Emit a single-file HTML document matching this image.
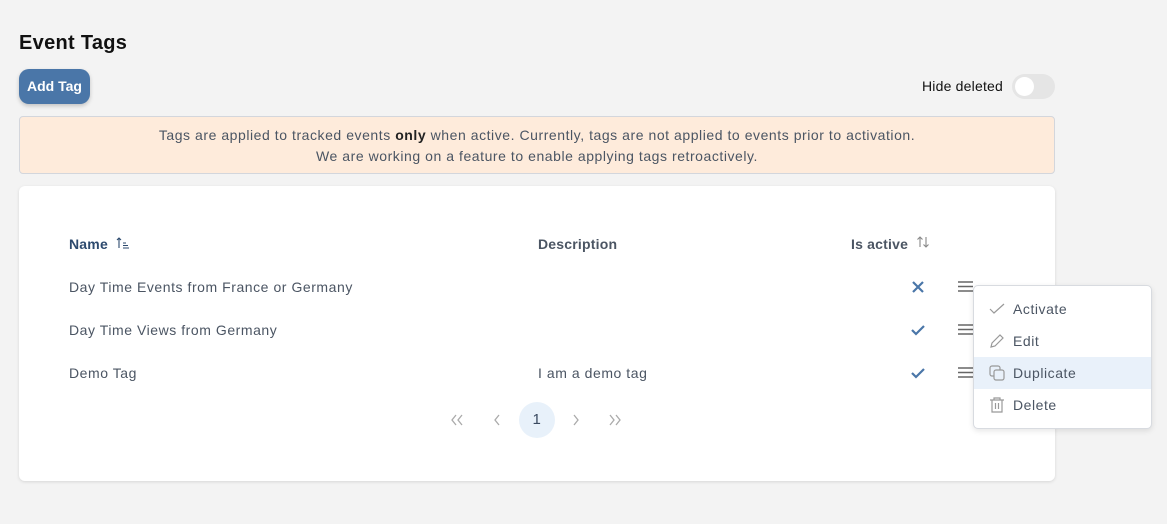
<!DOCTYPE html><html><head><style>
*{box-sizing:border-box;margin:0;padding:0}
body{width:1167px;height:524px;background:#f3f3f3;font-family:"Liberation Sans",sans-serif;position:relative;overflow:hidden;color:#4b5563;letter-spacing:0.55px}
.a{position:absolute}
h1{position:absolute;left:19px;top:32px;font-size:20px;font-weight:bold;color:#111;letter-spacing:0.3px}
.btn{left:19px;top:69px;width:71px;height:35px;background:#4a76a8;border-radius:10px;color:#fff;font-weight:bold;font-size:14px;line-height:35px;text-align:center;box-shadow:0 2px 4px rgba(0,0,0,.2);letter-spacing:0}
.alert{left:19px;top:116px;width:1036px;height:58px;background:#feebdb;border:1px solid #d3d6dc;border-radius:4px;text-align:center;font-size:14px;line-height:21px;padding-top:8px;color:#4b5563}
.card{left:19px;top:186px;width:1036px;height:295px;background:#fff;border-radius:6px;box-shadow:0 1px 3px rgba(0,0,0,.12)}
.th{font-size:14px;font-weight:bold;color:#4b5563;letter-spacing:0.2px}
.td{font-size:14px;color:#4b5563}
.menu{left:973px;top:285px;width:179px;height:144px;background:#fff;border:1px solid #d8dbe0;border-radius:5px;box-shadow:0 2px 6px rgba(0,0,0,.1)}
.mi{position:absolute;left:0;width:177px;height:32px;font-size:14px;line-height:32px;padding-left:39px;color:#4b5563}
.mi svg{position:absolute;left:15px;top:8px}
</style></head><body>
<h1>Event Tags</h1>
<div class="a btn">Add Tag</div>
<div class="a" style="left:922px;top:78px;font-size:14px;color:#111;letter-spacing:0.2px">Hide deleted</div>
<div class="a" style="left:1012px;top:74px;width:43px;height:25px;border-radius:13px;background:#e5e5e5"><div style="position:absolute;left:3px;top:3px;width:19px;height:19px;border-radius:50%;background:#fff"></div></div>
<div class="a alert">Tags are applied to tracked events <b style="color:#222">only</b> when active. Currently, tags are not applied to events prior to activation.<br>We are working on a feature to enable applying tags retroactively.</div>
<div class="a card"></div>
<div class="a th" style="left:69px;top:236px;color:#2d4a6e">Name</div>
<svg class="a" style="left:116px;top:236px" width="14" height="14"><path d="M3 12V2M1 4L3 2L5 4M7 7H10M7 9.5H12M7 12H13" stroke="#2d4a6e" stroke-width="1.1" fill="none"/></svg>
<div class="a th" style="left:538px;top:236px">Description</div>
<div class="a th" style="left:851px;top:236px">Is active</div>
<svg class="a" style="left:916px;top:235px" width="14" height="14"><path d="M4 12V2M1.5 4.5L4 2L6.5 4.5M10 2V12M7.5 9.5L10 12L12.5 9.5" stroke="#888" stroke-width="1.1" fill="none"/></svg>
<div class="a td" style="left:69px;top:279px">Day Time Events from France or Germany</div>
<div class="a td" style="left:69px;top:322px">Day Time Views from Germany</div>
<div class="a td" style="left:69px;top:365px">Demo Tag</div>
<div class="a td" style="left:538px;top:365px">I am a demo tag</div>
<svg class="a" style="left:911px;top:280px" width="14" height="14"><path d="M2 2L12 12M12 2L2 12" stroke="#4a76a8" stroke-width="2.2"/></svg>
<svg class="a" style="left:910px;top:323px" width="16" height="14"><path d="M2 7L6 11L14 3" stroke="#4a76a8" stroke-width="2.2" fill="none"/></svg>
<svg class="a" style="left:910px;top:366px" width="16" height="14"><path d="M2 7L6 11L14 3" stroke="#4a76a8" stroke-width="2.2" fill="none"/></svg>
<svg class="a" style="left:958px;top:280px" width="15" height="100"><g stroke="#666" stroke-width="1.5"><path d="M0 2H15M0 6.5H15M0 11H15"/><path d="M0 45H15M0 49.5H15M0 54H15"/><path d="M0 88H15M0 92.5H15M0 97H15"/></g></svg>
<div class="a menu">
<div class="mi" style="top:7px"><svg width="16" height="16"><path d="M1 8L5 12L15 3" stroke="#999" stroke-width="1.2" fill="none"/></svg>Activate</div>
<div class="mi" style="top:39px"><svg width="16" height="16"><path d="M2 14L3 10L11 2L14 5L6 13Z" stroke="#999" stroke-width="1.2" fill="none"/></svg>Edit</div>
<div class="mi" style="top:71px;background:#e9f1fa"><svg width="16" height="16"><rect x="1" y="1" width="10" height="10" rx="2" stroke="#999" fill="none" stroke-width="1.2"/><rect x="5" y="5" width="10" height="10" rx="2" stroke="#999" fill="#e9f1fa" stroke-width="1.2"/></svg>Duplicate</div>
<div class="mi" style="top:103px"><svg width="16" height="16"><path d="M1 3H15M5 3V1H11V3M3 3V15H13V3M6.5 6V12M9.5 6V12" stroke="#999" stroke-width="1.2" fill="none"/></svg>Delete</div>
</div>
<svg class="a" style="left:450px;top:414px" width="190" height="12" fill="none" stroke="#aaa" stroke-width="1.3">
<path d="M6 1L2 6L6 11M12 1L8 6L12 11"/>
<path d="M49 1L45 6L49 11"/>
<path d="M124 1L128 6L124 11"/>
<path d="M160 1L164 6L160 11M166 1L170 6L166 11"/>
</svg>
<div class="a" style="left:519px;top:402px;width:36px;height:36px;border-radius:50%;background:#e8f1fa;text-align:center;line-height:36px;font-size:15px;color:#3a4a60">1</div>
</body></html>
